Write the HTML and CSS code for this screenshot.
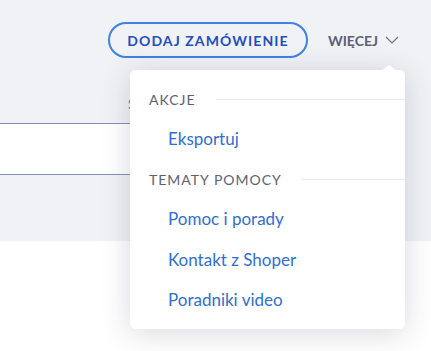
FILE: index.html
```html
<!DOCTYPE html>
<html lang="pl">
<head>
    <meta charset="UTF-8">
    <title>Zamówienia</title>
    <link rel="stylesheet" href="styles.css">
</head>
<body>
    <div class="top">
        <div class="toolbar">
            <button class="btn-add">DODAJ ZAMÓWIENIE</button>
            <div class="more">
                <span>WIĘCEJ</span>
                <svg width="14" height="8" viewBox="0 0 14 8"><path d="M1 1l6 6 6-6" fill="none" stroke="#6f7588" stroke-width="1.2"/></svg>
            </div>
        </div>
        <div class="filters">
            <div class="field-label">S</div>
            <div class="field"></div>
        </div>
    </div>

    <div class="dropdown">
        <div class="section">AKCJE</div>
        <a class="item">Eksportuj</a>
        <div class="section">TEMATY POMOCY</div>
        <a class="item">Pomoc i porady</a>
        <a class="item">Kontakt z Shoper</a>
        <a class="item">Poradniki video</a>
    </div>
</body>
</html>
```

FILE: styles.css
```css
body {
    margin: 0;
    background: #fff;
    font-family: "Lato", "Noto Sans", sans-serif;
}
.top {
    background: #f1f2f6;
    height: 241px;
}
.toolbar {
    display: flex;
    justify-content: flex-end;
    align-items: center;
    gap: 20px;
    padding: 22px 32px 0 0;
}
.btn-add {
    height: 36px;
    width: 200px;
    border: 2px solid #3d82e6;
    border-radius: 18px;
    background: transparent;
    color: #1d4fbf;
    font-family: inherit;
    font-weight: 700;
    font-size: 14px;
    letter-spacing: 1.1px;
}
.more {
    display: flex;
    align-items: center;
    gap: 7px;
    color: #596078;
    font-weight: 700;
    font-size: 14px;
}
.filters {
    padding-top: 37px;
}
.field-label {
    padding-left: 128px;
    font-size: 14px;
    color: #8a6f74;
    height: 18px;
}
.field {
    margin-top: 10px;
    width: 300px;
    height: 50px;
    background: #fff;
    border-top: 1px solid #8392b4;
    border-bottom: 1px solid #8392b4;
}
.dropdown {
    position: absolute;
    left: 130px;
    top: 70px;
    width: 275px;
    height: 250px;
    padding-top: 9px;
    background: #fff;
    border-radius: 5px;
    box-shadow: 0 4px 30px rgba(40, 45, 70, 0.18);
}
.dropdown::before {
    content: "";
    position: absolute;
    top: -5px;
    right: 9px;
    border: 7px solid transparent;
    border-bottom: 5px solid #fff;
    border-top: 0;
}
.section {
    display: flex;
    align-items: center;
    gap: 20px;
    height: 40px;
    padding-left: 19px;
    font-size: 14px;
    letter-spacing: 1px;
    color: #5b6276;
}
.section::after {
    content: "";
    flex: 1;
    height: 1px;
    background: #e6e8ee;
}
.item {
    display: block;
    height: 40px;
    line-height: 40px;
    padding-left: 38px;
    font-size: 17px;
    color: #2f6fd0;
}
.section + .item + .item {
    margin-top: 1px;
}
```
